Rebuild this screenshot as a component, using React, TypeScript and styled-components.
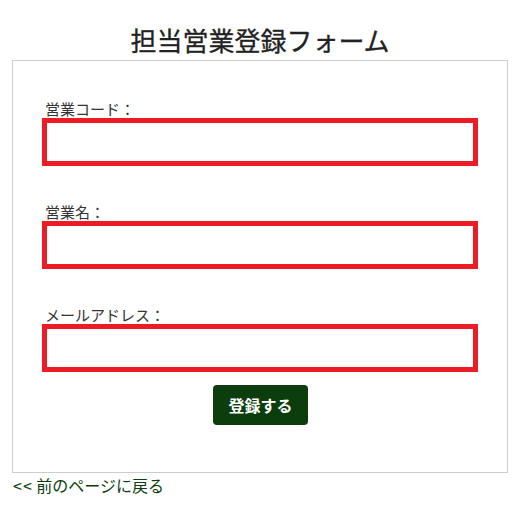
import React from 'react'
import styled, { createGlobalStyle } from 'styled-components'

const GlobalStyle = createGlobalStyle`
  body {
    margin: 0;
    background: #fff;
    font-family: "Noto Sans CJK JP", "Noto Sans", sans-serif;
    color: #333;
  }
`

const Page = styled.div`
  width: 527px;
`

const Title = styled.h1`
  margin: 22px 0 2px 12px;
  width: 496px;
  text-align: center;
  font-size: 26px;
  line-height: 36px;
  font-weight: 400;
  color: #222;
  -webkit-text-stroke: 0.3px #222;
`

const FormCard = styled.form`
  box-sizing: border-box;
  width: 496px;
  margin-left: 12px;
  border: 1px solid #cccccc;
  padding: 38px 28px 47px 29px;
  display: flex;
  flex-direction: column;
`

const Field = styled.div<{ $gap: number }>`
  display: flex;
  flex-direction: column;
  margin-bottom: ${p => p.$gap}px;
`

const Label = styled.label`
  font-size: 15px;
  line-height: 19px;
  padding-left: 3px;
  color: #333;
`

const TextInput = styled.input`
  box-sizing: border-box;
  width: 436px;
  height: 48px;
  border: 5px solid #ed1c24;
  border-radius: 0;
  background: #fff;
  outline: none;
  padding: 0 8px;
  font-size: 15px;
  font-family: inherit;
`

const Actions = styled.div`
  display: flex;
  justify-content: center;
`

const SubmitButton = styled.button`
  height: 40px;
  padding: 0 15px;
  border: none;
  border-radius: 4px;
  background: #0b3d0d;
  color: #fff;
  font-family: inherit;
  font-size: 16px;
  font-weight: 700;
  cursor: pointer;
`

const BackLink = styled.a`
  display: inline-block;
  margin: 2px 0 0 13px;
  font-size: 16px;
  line-height: 20px;
  color: #0b3d0d;
  text-decoration: none;

  span {
    letter-spacing: 1px;
  }
`

const fields = [
  { id: 'code', label: '営業コード：', gap: 36 },
  { id: 'name', label: '営業名：', gap: 36 },
  { id: 'mail', label: 'メールアドレス：', gap: 13 },
]

const App: React.FC = () => {
  return (
    <Page>
      <GlobalStyle />
      <Title>担当営業登録フォーム</Title>
      <FormCard onSubmit={e => e.preventDefault()}>
        {fields.map(f => (
          <Field key={f.id} $gap={f.gap}>
            <Label htmlFor={f.id}>{f.label}</Label>
            <TextInput id={f.id} type="text" />
          </Field>
        ))}
        <Actions>
          <SubmitButton type="submit">登録する</SubmitButton>
        </Actions>
      </FormCard>
      <BackLink href="#"><span>&lt;&lt;</span> 前のページに戻る</BackLink>
    </Page>
  )
}

export default App
